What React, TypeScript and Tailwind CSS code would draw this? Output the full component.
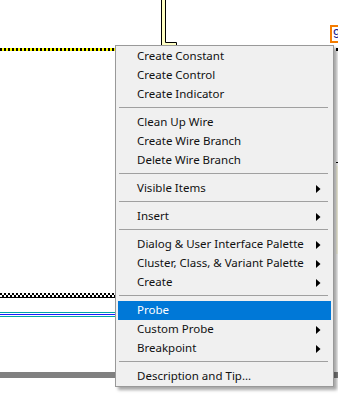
type Item = { label: string; sub?: boolean; active?: boolean } | "sep";

const items: Item[] = [
  { label: "Create Constant" },
  { label: "Create Control" },
  { label: "Create Indicator" },
  "sep",
  { label: "Clean Up Wire" },
  { label: "Create Wire Branch" },
  { label: "Delete Wire Branch" },
  "sep",
  { label: "Visible Items", sub: true },
  "sep",
  { label: "Insert", sub: true },
  "sep",
  { label: "Dialog & User Interface Palette", sub: true },
  { label: "Cluster, Class, & Variant Palette", sub: true },
  { label: "Create", sub: true },
  "sep",
  { label: "Probe", active: true },
  { label: "Custom Probe", sub: true },
  { label: "Breakpoint", sub: true },
  "sep",
  { label: "Description and Tip..." },
];

function Arrow({ white }: { white?: boolean }) {
  return (
    <svg width="5" height="8" viewBox="0 0 5 8" className="shrink-0">
      <path d="M0 0 L4.5 4 L0 8 Z" fill={white ? "#fff" : "#000"} />
    </svg>
  );
}

function ContextMenu() {
  return (
    <div className="absolute left-[115px] top-[45px] flex w-[219px] flex-col border border-[#999] bg-[#f0f0f0] pt-px shadow-[3px_3px_3px_rgba(0,0,0,0.35)]">
      {items.map((it, i) =>
        it === "sep" ? (
          <div key={i} className="h-[9px] pt-[3px] pl-[3px] pr-[5px]">
            <div className="h-px bg-[#a0a0a0]" />
          </div>
        ) : (
          <div
            key={i}
            className={
              "mx-[2px] flex h-[19px] items-center justify-between pl-[19px] pr-[10px] whitespace-nowrap " +
              (it.active ? "bg-[#0078d7] text-white" : "text-[#111]")
            }
          >
            <span className="-mt-px">{it.label}</span>
            {it.sub && <Arrow white={it.active} />}
          </div>
        )
      )}
    </div>
  );
}

const dotted = "h-[3px] bg-[repeating-linear-gradient(90deg,#000_0_2px,#ffff00_2px_4px)]";

export default function App() {
  return (
    <div className="relative w-[338px] h-[396px] overflow-hidden bg-white text-[11.5px] font-['Noto_Sans',sans-serif]">
      {/* yellow wire coming down from the top */}
      <svg width="20" height="46" className="absolute left-[160px] top-0">
        <rect x="2" y="0" width="3" height="46" fill="#ffffc4" />
        <rect x="2" y="43" width="14" height="3" fill="#ffffc4" />
        <path d="M1.5 0 V46 M5.5 0 V42.5 H16.5 V46" stroke="#000" strokeWidth="1" fill="none" />
      </svg>

      {/* wires on the left of the menu */}
      <div className="absolute left-0 top-[48px] flex w-[116px] flex-col">
        <div className={dotted} />
        <svg width="116" height="5" className="mt-[242px]">
          <defs>
            <pattern id="chk" width="4" height="4" patternUnits="userSpaceOnUse">
              <rect width="4" height="4" fill="#fff" />
              <rect x="0" y="0" width="2" height="2" fill="#000" />
              <rect x="2" y="2" width="2" height="2" fill="#000" />
            </pattern>
          </defs>
          <rect width="116" height="4" fill="url(#chk)" />
          <rect y="4" width="116" height="1" fill="#000" />
        </svg>
        <div className="mt-[14px] flex flex-col gap-px">
          <div className="h-px bg-[#00a6a6]" />
          <div className="h-px bg-[#1c1cff]" />
          <div className="h-px bg-[#00a6a6]" />
        </div>
        <div className="mt-[55px] h-[6px] bg-[#808080]" />
      </div>

      {/* orange numeric box */}
      <div className="absolute left-[330px] top-[25px] w-[14px] h-[18px] border-2 border-[#f57c00] bg-white pl-[1px] text-[13px] leading-[14px] text-[#1a1a8c] font-['Liberation_Sans',sans-serif]">
        9
      </div>

      {/* bits right of the menu */}
      <div className="absolute left-[336px] top-[48px] w-[4px]">
        <div className={dotted} />
        <div className="mt-[111px] h-px bg-black" />
        <div className="mt-[3px] h-[88px] bg-[#fdfbe8]" />
      </div>
      <div className="absolute left-[334px] top-[372px] w-[6px] h-[6px] bg-[#808080]" />

      <ContextMenu />
    </div>
  );
}
